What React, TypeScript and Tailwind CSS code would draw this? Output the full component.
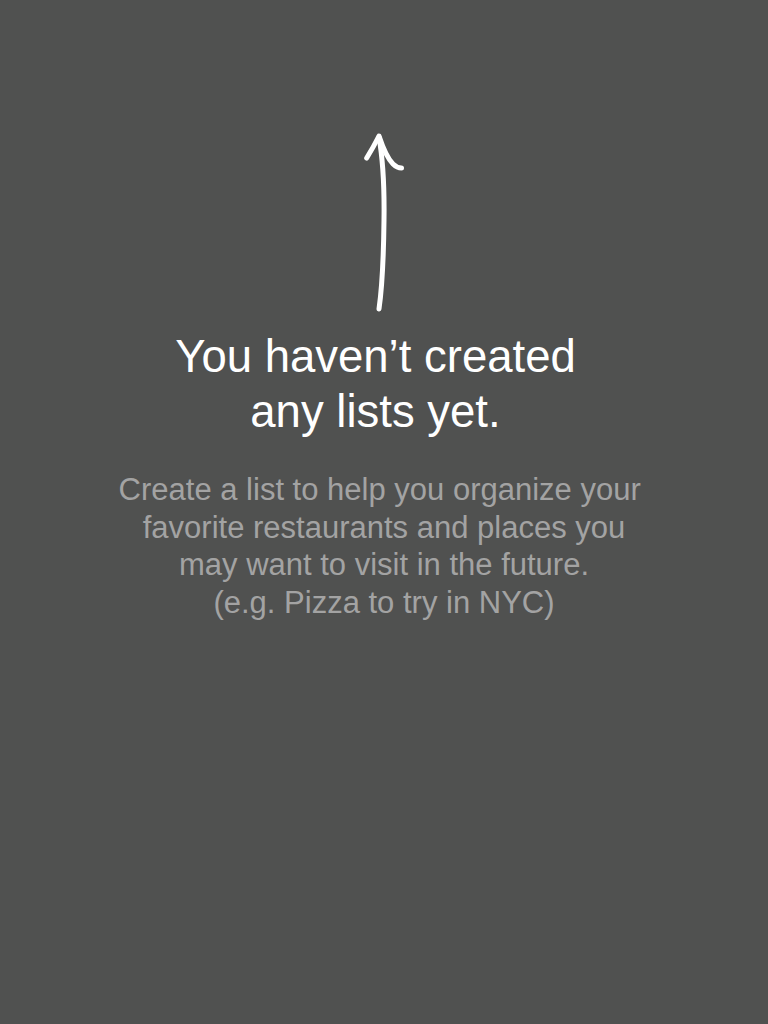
import React from "react";

export default function App() {
  return (
    <div
      className="w-[768px] h-[1024px] bg-[#505150] flex flex-col items-center pt-[125px]"
      style={{ fontFamily: '"Liberation Sans", Arial, sans-serif' }}
    >
      <svg width="60" height="195" viewBox="0 0 60 195" fill="none" className="block shrink-0 ml-[-8px]">
        <path
          d="M16.7 33 C21 26 26 17 29 11 C32 20 37 33 43 39 C46 42 49 43 51.5 43"
          stroke="#ffffff"
          strokeWidth="5"
          strokeLinecap="round"
          strokeLinejoin="round"
        />
        <path
          d="M29 12 C33 35 34.5 60 34 95 C33.5 140 31 170 29 184"
          stroke="#ffffff"
          strokeWidth="5"
          strokeLinecap="round"
        />
      </svg>
      <div className="mt-[9px] pr-[17px] text-center text-white text-[45.5px] leading-[55px]">
        <div>You haven’t created</div>
        <div>any lists yet.</div>
      </div>
      <div className="mt-[32px] text-center text-[#a3a3a3] text-[31px] leading-[37.5px]">
        <div>Create a list to help you organize your{"\u00a0"}</div>
        <div>favorite restaurants and places you</div>
        <div>may want to visit in the future.</div>
        <div>(e.g. Pizza to try in NYC)</div>
      </div>
    </div>
  );
}
